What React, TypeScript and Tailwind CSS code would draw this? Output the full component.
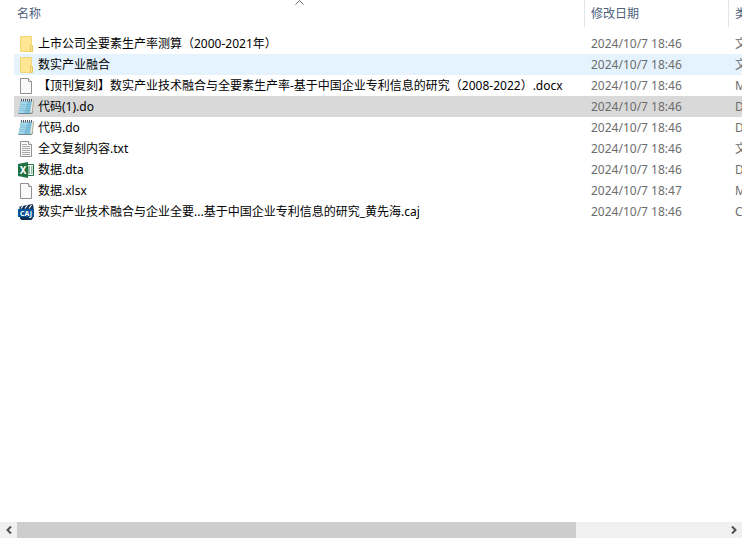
import type { ReactElement } from "react";

type Kind = "folder" | "blank" | "notepad" | "text" | "excel" | "caj";

interface FileRow {
  name: string;
  date: string;
  type: string;
  kind: Kind;
  state?: "hover" | "selected";
}

const files: FileRow[] = [
  { name: "上市公司全要素生产率测算（2000-2021年）", date: "2024/10/7 18:46", type: "文件夹", kind: "folder" },
  { name: "数实产业融合", date: "2024/10/7 18:46", type: "文件夹", kind: "folder", state: "hover" },
  {
    name: "【顶刊复刻】数实产业技术融合与全要素生产率-基于中国企业专利信息的研究（2008-2022）.docx",
    date: "2024/10/7 18:46",
    type: "Microsoft Word",
    kind: "blank",
  },
  { name: "代码(1).do", date: "2024/10/7 18:46", type: "DO 文件", kind: "notepad", state: "selected" },
  { name: "代码.do", date: "2024/10/7 18:46", type: "DO 文件", kind: "notepad" },
  { name: "全文复刻内容.txt", date: "2024/10/7 18:46", type: "文本文档", kind: "text" },
  { name: "数据.dta", date: "2024/10/7 18:46", type: "DTA 文件", kind: "excel" },
  { name: "数据.xlsx", date: "2024/10/7 18:47", type: "Microsoft Excel", kind: "blank" },
  {
    name: "数实产业技术融合与企业全要...基于中国企业专利信息的研究_黄先海.caj",
    date: "2024/10/7 18:46",
    type: "CAJ 文件",
    kind: "caj",
  },
];

const drawings: Record<Kind, ReactElement> = {
  folder: (
    <>
      <path d="M2.5 0.5h11v15h-11z" fill="#ffe694" stroke="#f3d678" />
      <path d="M12.5 9.5h2v6h-2z" fill="#ffe694" stroke="#e8c65e" />
    </>
  ),
  blank: (
    <>
      <path d="M2.5 0.5h8l3 3v12h-11z" fill="#fafafa" stroke="#909090" />
      <path d="M10.5 0.5v3h3" fill="#fff" stroke="#909090" />
    </>
  ),
  text: (
    <>
      <path d="M2.5 0.5h8l3 3v12h-11z" fill="#fafafa" stroke="#909090" />
      <path d="M10.5 0.5v3h3" fill="#fff" stroke="#909090" />
      <path d="M4 3.5h5M4 5.5h8M4 7.5h8M4 9.5h8M4 11.5h8M4 13.5h8" stroke="#a8a8a8" />
    </>
  ),
  notepad: (
    <>
      <path d="M3.5 1.5h12l-1.500 13H1z" fill="#f4f2e8" stroke="#9d967f" strokeWidth="0.8" />
      <path d="M3 2h11l-1.800 12H0.500z" fill="#7fc0da" />
      <path d="M3 2h7L6 14H0.500z" fill="#a3d6e8" />
      <path d="M3 5.5h9.500M2.500 7.500h9.500M2 9.500h9.500M1.500 11.500h9.500" stroke="#6fb2cf" strokeWidth="0.5" />
      <path d="M0.500 14.500h12.500l2-2" fill="none" stroke="#6b8791" />
      <path d="M3 1.500h12" stroke="#dfe7ea" />
      <path d="M3.500 0v2.500M5.500 0v2.500M7.500 0v2.500M9.500 0v2.500M11.500 0v2.500M13.500 0v2.500" stroke="#4b5a62" />
    </>
  ),
  excel: (
    <>
      <path d="M8 2.500h7.500v11H8z" fill="#fff" stroke="#207245" />
      <path d="M10 5h2M13 5h1.500M10 7h2M13 7h1.500M10 9h2M13 9h1.500M10 11h2M13 11h1.500" stroke="#207245" />
      <path d="M0 2l10-2v16L0 14z" fill="#207245" />
      <text x="5" y="11.500" textAnchor="middle" fontSize="10" fontWeight="700" fill="#fff">
        X
      </text>
    </>
  ),
  caj: (
    <>
      <path d="M1.500 2.500L14.500 0l1 2.500V5h-14zM2 12.500h13V14l-1.500 2H3.500L2 14.500z" fill="#0f2f52" />
      <path d="M3 4.500l2.500-3.500M7 4.500l2.500-3.500M11 4.500l2.500-3.500" stroke="#fff" strokeWidth="1.200" />
      <path d="M0 5h16v8H0z" fill="#06549a" />
      <text x="8" y="11.500" textAnchor="middle" fontSize="7" fontWeight="700" fill="#fff">
        CAJ
      </text>
    </>
  ),
};

function FileIcon({ kind }: { kind: Kind }) {
  return (
    <svg viewBox="0 0 16 16" className="size-4 shrink-0" aria-hidden="true">
      {drawings[kind]}
    </svg>
  );
}

function rowColor(state: FileRow["state"]) {
  if (state === "selected") return "bg-[#d9d9d9]";
  if (state === "hover") return "bg-[#e5f3ff]";
  return "bg-white";
}

function ScrollButton({ label, path }: { label: string; path: string }) {
  return (
    <button type="button" aria-label={label} className="flex h-4 w-[17px] items-center justify-center">
      <svg viewBox="0 0 8 8" className="size-2" aria-hidden="true">
        <path d={path} fill="none" stroke="#505050" strokeWidth="2" />
      </svg>
    </button>
  );
}

export default function App() {
  return (
    <div className="flex h-screen flex-col overflow-hidden bg-white font-['Noto_Sans','Noto_Sans_CJK_SC',sans-serif] text-xs text-black">
      <main className="min-h-0 flex-1 overflow-hidden pl-3.5">
        <table className="w-[920px] table-fixed border-separate border-spacing-0 whitespace-nowrap text-left">
          <colgroup>
            <col className="w-[571px]" />
            <col className="w-36" />
            <col />
          </colgroup>
          <thead className="text-[#4c607a]">
            <tr className="h-[27px]">
              <th scope="col" aria-sort="ascending" className="relative border-r border-[#e5e5e5] p-0 pl-[3px] font-normal">
                名称
                <svg viewBox="0 0 9 5" className="absolute inset-x-0 top-0 mx-auto h-[5px] w-[9px]" aria-hidden="true">
                  <path d="M0.500 4.500l4-4 4 4" fill="none" stroke="#666" />
                </svg>
              </th>
              <th scope="col" className="border-r border-[#e5e5e5] p-0 pl-1.5 font-normal">修改日期</th>
              <th scope="col" className="p-0 pl-1.5 font-normal">类型</th>
            </tr>
          </thead>
          <tbody>
            <tr className="h-1.5" aria-hidden="true">
              <td colSpan={3} className="p-0" />
            </tr>
            {files.map((file) => (
              <tr key={file.name} className={`h-[21px] ${rowColor(file.state)}`}>
                <td className="p-0 pl-1">
                  <div className="flex items-center gap-1">
                    <FileIcon kind={file.kind} />
                    <span className="leading-5">{file.name}</span>
                  </div>
                </td>
                <td className="p-0 pl-1.5 text-[#6d6d6d]">{file.date}</td>
                <td className="p-0 pl-1.5 text-[#6d6d6d]">{file.type}</td>
              </tr>
            ))}
          </tbody>
        </table>
      </main>
      <footer className="flex h-4 shrink-0 bg-[#f0f0f0]">
        <ScrollButton label="向左滚动" path="M6 0.500L2.500 4 6 7.500" />
        <div className="flex-1">
          <div className="h-full w-[79%] bg-[#cdcdcd]" />
        </div>
        <ScrollButton label="向右滚动" path="M2 0.500L5.500 4 2 7.500" />
      </footer>
    </div>
  );
}
